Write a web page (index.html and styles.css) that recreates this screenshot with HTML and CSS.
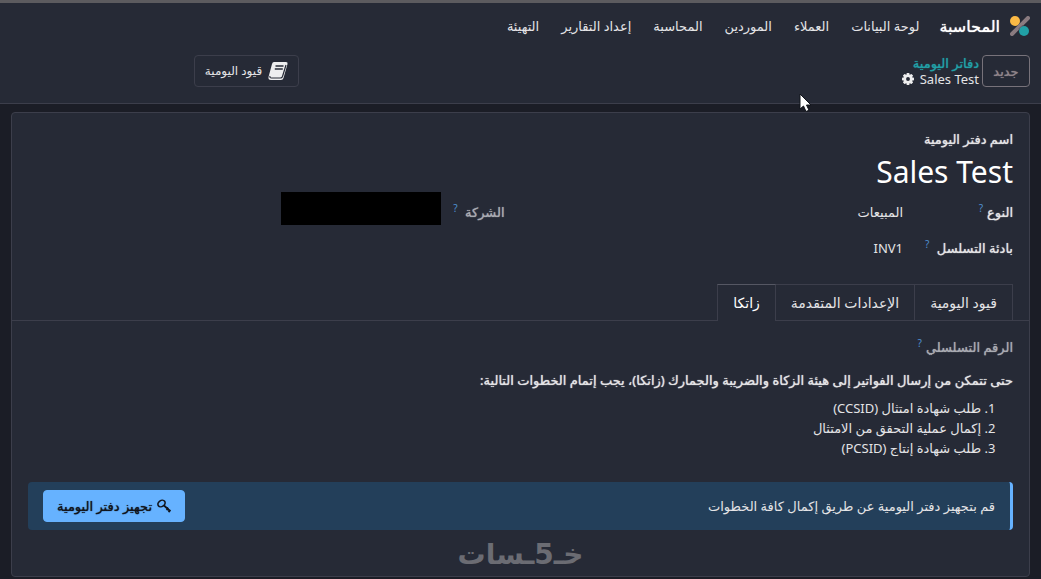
FILE: index.html
```html
<!DOCTYPE html>
<html lang="ar" dir="rtl">
<head>
    <meta charset="UTF-8">
    <meta name="viewport" content="width=device-width, initial-scale=1.0">
    <title>Sales Test</title>
    <link rel="stylesheet" href="styles.css">
</head>
<body>
    <header>
        <nav class="navbar">
            <svg class="app-icon" viewBox="0 0 20 20" aria-hidden="true">
                <circle cx="5" cy="5" r="5" fill="#fbb945"/>
                <path d="M2 18L18 2" stroke="#8a7b80" stroke-width="4" stroke-linecap="round"/>
                <circle cx="14" cy="15" r="5" fill="#21a0a6"/>
                <path d="M9 15a5 5 0 0 1 5-5l-1.500-1-4 3.500z" fill="#5d5a65"/>
            </svg>
            <a href="#" class="brand">المحاسبة</a>
            <ul>
                <li><a href="#">لوحة البيانات</a></li>
                <li><a href="#">العملاء</a></li>
                <li><a href="#">الموردين</a></li>
                <li><a href="#">المحاسبة</a></li>
                <li><a href="#">إعداد التقارير</a></li>
                <li><a href="#">التهيئة</a></li>
            </ul>
        </nav>
        <div class="control-panel">
            <button type="button" class="btn-new">جديد</button>
            <div class="breadcrumb">
                <a href="#">دفاتر اليومية</a>
                <div class="current">
                    <span>Sales Test</span>
                    <svg viewBox="0 0 16 16" width="12" height="12" aria-hidden="true">
                        <g fill="#eeeeef">
                            <rect x="6" y="0" width="4" height="16" rx="1"/>
                            <rect x="6" y="0" width="4" height="16" rx="1" transform="rotate(45 8 8)"/>
                            <rect x="6" y="0" width="4" height="16" rx="1" transform="rotate(90 8 8)"/>
                            <rect x="6" y="0" width="4" height="16" rx="1" transform="rotate(135 8 8)"/>
                            <circle cx="8" cy="8" r="6"/>
                        </g>
                        <circle cx="8" cy="8" r="2.600" fill="#262a36"/>
                    </svg>
                </div>
            </div>
            <button type="button" class="btn-entries">
                <svg viewBox="0 0 20 20" width="20" height="20" aria-hidden="true">
                    <path d="M6 1h12q2 0 1.500 2l-4 14q-.5 2-2.500 2H3q-3 0-2.500-3L4 3q.5-2 2-2z" fill="#eeeeef"/>
                    <path d="M7.500 5h8M6.800 8h8" stroke="#262a36" stroke-width="1.500"/>
                    <path d="M2 15q-.5 2 1.500 2h9q1.500 0 2-1.500L18 4" fill="none" stroke="#262a36" stroke-width="1.200"/>
                </svg>
                <span>قيود اليومية</span>
            </button>
        </div>
    </header>

    <main class="sheet">
        <h2 class="name-label">اسم دفتر اليومية</h2>
        <h1>Sales Test</h1>

        <div class="groups">
            <dl class="group">
                <dt>النوع<sup>?</sup></dt>
                <dd>المبيعات</dd>
                <dt>بادئة التسلسل <sup>?</sup></dt>
                <dd>INV1</dd>
            </dl>
            <dl class="group company">
                <dt>الشركة <sup>?</sup></dt>
                <dd><span class="redacted"></span></dd>
            </dl>
        </div>

        <div class="tabs" role="tablist">
            <button type="button" role="tab" aria-selected="false">قيود اليومية</button>
            <button type="button" role="tab" aria-selected="false">الإعدادات المتقدمة</button>
            <button type="button" role="tab" aria-selected="true" class="active">زاتكا</button>
        </div>

        <section class="tab-content">
            <p class="serial">الرقم التسلسلي<sup>?</sup></p>
            <p class="intro">حتى تتمكن من إرسال الفواتير إلى هيئة الزكاة والضريبة والجمارك (زاتكا)، يجب إتمام الخطوات التالية:</p>
            <ol>
                <li>طلب شهادة امتثال (CCSID)</li>
                <li>إكمال عملية التحقق من الامتثال</li>
                <li>طلب شهادة إنتاج (PCSID)</li>
            </ol>
            <div class="alert">
                <span>قم بتجهيز دفتر اليومية عن طريق إكمال كافة الخطوات</span>
                <button type="button" class="btn-setup">
                    <svg viewBox="0 0 14 14" width="14" height="14" aria-hidden="true">
                        <ellipse cx="4.500" cy="4.500" rx="3.800" ry="3" transform="rotate(-35 4.500 4.500)" fill="none" stroke="#11141b" stroke-width="1.600"/>
                        <path d="M7 6.500l6 5.500M9.500 11l2-2M11.500 13l2-2" fill="none" stroke="#11141b" stroke-width="1.800"/>
                    </svg>
                    <span>تجهيز دفتر اليومية</span>
                </button>
            </div>
        </section>
    </main>

    <div class="watermark">خـ5ـسات</div>
    <svg class="pointer" viewBox="0 0 12 19" aria-hidden="true">
        <path d="M1 1v15l3.500-3 2.500 5.500 3-1.300-2.500-5.200H12z" fill="#fff" stroke="#11141b" stroke-width="1"/>
    </svg>
</body>
</html>
```

FILE: styles.css
```css
:root {
    --panel-color: #262a36;
    --background-color: #1b1d26;
    --border-color: #3c3e4b;
    --text-color: #e4e4e6;
    --text-muted: #a9abb2;
    --primary-color: #66b2ff;
    --teal-color: #21a0a6;
    --semibold: 0 0 1px currentColor;
}

* {
    margin: 0;
    padding: 0;
    box-sizing: border-box;
}

body {
    display: flex;
    flex-direction: column;
    min-height: 100vh;
    font-family: "Noto Sans", "DejaVu Sans", sans-serif;
    font-size: 13px;
    line-height: 20px;
    color: var(--text-color);
    background-color: var(--background-color);
}

a {
    color: inherit;
    text-decoration: none;
}

button {
    font: inherit;
    color: inherit;
    background: none;
    border: 1px solid var(--border-color);
    cursor: pointer;
}

header {
    background-color: var(--panel-color);
    border-top: 3px solid #5c5b5f;
    border-bottom: 1px solid var(--border-color);
}

.navbar {
    display: flex;
    align-items: center;
    gap: 10px;
    height: 45px;
    padding: 0 11px;
}

.app-icon {
    width: 20px;
    height: 20px;
}

.brand {
    font-size: 16px;
    color: #ffffff;
    text-shadow: var(--semibold);
}

.navbar ul {
    display: flex;
    gap: 22px;
    margin-right: 10px;
    list-style: none;
}

.control-panel {
    display: flex;
    align-items: center;
    gap: 3px;
    height: 55px;
    padding: 0 11px 10px;
}

.btn-new {
    width: 48px;
    height: 32px;
    color: #8f848a;
    border-color: #77727a;
    border-radius: 4px;
    text-shadow: var(--semibold);
}

.breadcrumb {
    line-height: 16px;
}

.breadcrumb a {
    color: var(--teal-color);
    text-shadow: var(--semibold);
}

.current {
    display: flex;
    align-items: center;
    gap: 6px;
}

.btn-entries {
    display: flex;
    align-items: center;
    justify-content: center;
    gap: 6px;
    width: 105px;
    height: 32px;
    margin-right: auto;
    margin-left: 183px;
    border-radius: 4px;
    font-size: 12px;
}

.sheet {
    flex: 1;
    margin: 8px 11px 2px;
    padding: 16px 0;
    background-color: var(--panel-color);
    border: 1px solid var(--border-color);
    border-radius: 4px;
}

.name-label {
    padding: 0 16px;
    font-size: 13px;
    font-weight: normal;
    line-height: 20px;
    text-shadow: var(--semibold);
}

h1 {
    padding: 0 16px;
    font-size: 30px;
    font-weight: normal;
    line-height: 45px;
    color: #ffffff;
}

.groups {
    display: grid;
    grid-template-columns: 1fr 1fr;
    gap: 32px;
    padding: 0 16px;
}

.group {
    display: grid;
    grid-template-columns: 110px 1fr;
    grid-auto-rows: 36px;
    align-items: center;
}

.company {
    grid-template-columns: 64px 1fr;
}

dt {
    white-space: nowrap;
    text-shadow: var(--semibold);
}

.company dt,
.serial {
    color: var(--text-muted);
}

sup {
    margin-right: 4px;
    font-size: 10px;
    line-height: 0;
    color: #4f8fd0;
    text-shadow: none;
}

.redacted {
    display: block;
    width: 160px;
    height: 33px;
    margin-bottom: 8px;
    background-color: #000000;
}

.tabs {
    display: flex;
    margin-top: 18px;
    padding: 0 16px;
    border-bottom: 1px solid var(--border-color);
}

.tabs button {
    height: 36px;
    padding: 0 15px;
    border-bottom: none;
    border-left: none;
    font-size: 14px;
}

.tabs .active {
    margin-bottom: -1px;
    height: 37px;
    background-color: var(--panel-color);
    border-left: 1px solid var(--border-color);
    border-top-color: #555763;
    color: #ffffff;
}

.tab-content {
    padding: 16px 16px 0;
}

.serial {
    text-shadow: var(--semibold);
}

.intro {
    margin-top: 13px;
    text-shadow: var(--semibold);
}

ol {
    margin-top: 8px;
    padding-right: 32px;
}

.alert {
    display: flex;
    align-items: center;
    justify-content: space-between;
    margin-top: 24px;
    padding: 8px 15px;
    background-color: #233f5a;
    border-right: 3px solid var(--primary-color);
    border-radius: 4px;
}

.btn-setup {
    display: flex;
    align-items: center;
    justify-content: center;
    gap: 5px;
    width: 142px;
    height: 32px;
    color: #11141b;
    background-color: var(--primary-color);
    border-color: var(--primary-color);
    border-radius: 4px;
    text-shadow: var(--semibold);
}

/* overlays */
.watermark {
    position: absolute;
    bottom: 4px;
    left: 50%;
    transform: translateX(-50%);
    font-family: "DejaVu Sans", sans-serif;
    font-size: 28px;
    font-weight: bold;
    line-height: 40px;
    color: #6b6c73;
}

.pointer {
    position: absolute;
    top: 93px;
    left: 799px;
    width: 12px;
    height: 19px;
}
```
